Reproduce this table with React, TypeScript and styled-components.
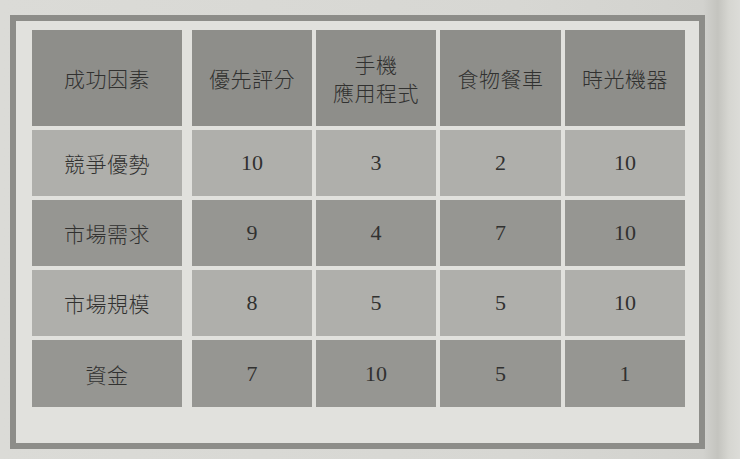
import React from 'react';
import styled, { createGlobalStyle } from 'styled-components';

const GlobalStyle = createGlobalStyle`
  html, body {
    margin: 0;
    padding: 0;
  }
  body {
    width: 740px;
    height: 459px;
    overflow: hidden;
    background: linear-gradient(90deg, #dbdbd7 0%, #d7d7d3 70%, #d2d2ce 95%, #c4c4bf 97%, #d6d6d1 98.5%, #dcdcd8 100%);
    font-family: "Noto Sans CJK TC", "Noto Sans", sans-serif;
  }
`;

const Page = styled.div`
  width: 740px;
  height: 459px;
  padding: 15px 0 0 10px;
  box-sizing: border-box;
`;

const Frame = styled.div`
  width: 695px;
  height: 434px;
  box-sizing: border-box;
  border: 6px solid #8d8d89;
  background: #e1e1dd;
  padding: 9px 0 0 16px;
`;

const Grid = styled.div`
  display: grid;
  grid-template-columns: 156px 120px 120px 121px 120px;
  grid-template-rows: 96px 66px 66px 66px 67px;
  column-gap: 4px;
  row-gap: 4px;
`;

const Cell = styled.div<{ $tone: 'head' | 'light' | 'dark'; $first?: boolean; $num?: boolean }>`
  display: flex;
  align-items: center;
  justify-content: center;
  text-align: center;
  margin-right: ${p => (p.$first ? '6px' : '0')};
  background: ${p =>
    p.$tone === 'head' ? '#8e8e8a' : p.$tone === 'light' ? '#afafab' : '#969692'};
  color: #313130;
  font-family: ${p =>
    p.$num
      ? '"Liberation Serif", "Times New Roman", serif'
      : '"Noto Sans CJK TC", "Noto Sans", sans-serif'};
  font-size: ${p => (p.$num ? '22px' : '21px')};
  font-weight: ${p => (p.$num ? 400 : 300)};
  line-height: 28px;
  letter-spacing: ${p => (p.$num ? '0' : '0.5px')};
`;

const headers = ['成功因素', '優先評分', '手機\n應用程式', '食物餐車', '時光機器'];

const rows: { label: string; values: number[]; tone: 'light' | 'dark' }[] = [
  { label: '競爭優勢', values: [10, 3, 2, 10], tone: 'light' },
  { label: '市場需求', values: [9, 4, 7, 10], tone: 'dark' },
  { label: '市場規模', values: [8, 5, 5, 10], tone: 'light' },
  { label: '資金', values: [7, 10, 5, 1], tone: 'dark' },
];

export default function App() {
  return (
    <>
      <GlobalStyle />
      <Page>
        <Frame>
          <Grid>
            {headers.map((h, i) => (
              <Cell key={h} $tone="head" $first={i === 0}>
                <span>
                  {h.split('\n').map((line, j) => (
                    <div key={j}>{line}</div>
                  ))}
                </span>
              </Cell>
            ))}
            {rows.map(r => (
              <React.Fragment key={r.label}>
                <Cell $tone={r.tone} $first>
                  {r.label}
                </Cell>
                {r.values.map((v, j) => (
                  <Cell key={j} $tone={r.tone} $num>
                    {v}
                  </Cell>
                ))}
              </React.Fragment>
            ))}
          </Grid>
        </Frame>
      </Page>
    </>
  );
}
